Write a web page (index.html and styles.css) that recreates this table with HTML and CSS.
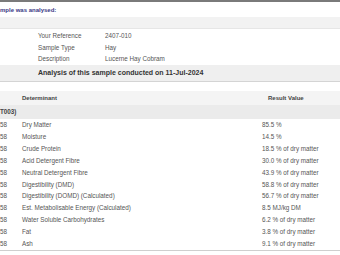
FILE: index.html
```html
<!DOCTYPE html>
<html>
<head>
<meta charset="utf-8">
<link rel="stylesheet" href="styles.css">
</head>
<body>
<div class="topbar"></div>
<div class="intro">mple was analysed:</div>
<div class="band"></div>
<div class="info">
  <div class="info-row"><span class="info-label">Your Reference</span><span>2407-010</span></div>
  <div class="info-row"><span class="info-label">Sample Type</span><span>Hay</span></div>
  <div class="info-row"><span class="info-label">Description</span><span>Lucerne Hay Cobram</span></div>
</div>
<div class="title">Analysis of this sample conducted on 11-Jul-2024</div>
<div class="results">
  <div class="row head"><span class="code"></span><span class="det">Determinant</span><span class="val">Result Value</span></div>
  <div class="row group"><span>T003)</span></div>
  <div class="row"><span class="code">58</span><span class="det">Dry Matter</span><span class="val">85.5 %</span></div>
  <div class="row"><span class="code">58</span><span class="det">Moisture</span><span class="val">14.5 %</span></div>
  <div class="row"><span class="code">58</span><span class="det">Crude Protein</span><span class="val">18.5 % of dry matter</span></div>
  <div class="row"><span class="code">58</span><span class="det">Acid Detergent Fibre</span><span class="val">30.0 % of dry matter</span></div>
  <div class="row"><span class="code">58</span><span class="det">Neutral Detergent Fibre</span><span class="val">43.9 % of dry matter</span></div>
  <div class="row"><span class="code">58</span><span class="det">Digestibility (DMD)</span><span class="val">58.8 % of dry matter</span></div>
  <div class="row"><span class="code">58</span><span class="det">Digestibility (DOMD) (Calculated)</span><span class="val">56.7 % of dry matter</span></div>
  <div class="row"><span class="code">58</span><span class="det">Est. Metabolisable Energy (Calculated)</span><span class="val">8.5 MJ/kg DM</span></div>
  <div class="row"><span class="code">58</span><span class="det">Water Soluble Carbohydrates</span><span class="val">6.2 % of dry matter</span></div>
  <div class="row"><span class="code">58</span><span class="det">Fat</span><span class="val">3.8 % of dry matter</span></div>
  <div class="row"><span class="code">58</span><span class="det">Ash</span><span class="val">9.1 % of dry matter</span></div>
</div>
</body>
</html>
```

FILE: styles.css
```css
html, body {
  margin: 0;
  padding: 0;
  background: #fff;
}
body {
  width: 340px;
  height: 255px;
  overflow: hidden;
  font-family: "Liberation Sans", Arial, sans-serif;
  font-size: 6.3px;
  color: #555;
}
.topbar {
  height: 2px;
  background: #7a7a7a;
}
.intro {
  height: 15px;
  line-height: 16px;
  font-weight: bold;
  font-size: 6px;
  color: #3c3a86;
}
.band {
  height: 11px;
  background: #f2f2f2;
  border-bottom: 1px solid #e6e6e6;
}
.info {
  padding: 1px 0 0 38px;
}
.info-row {
  display: flex;
  height: 11.7px;
  line-height: 11.7px;
}
.info-label {
  width: 67px;
}
.title {
  height: 16px;
  line-height: 16px;
  padding-left: 38px;
  background: #efefef;
  border-bottom: 1px solid #d4d4d4;
  font-weight: bold;
  font-size: 7px;
  color: #333;
}
.results {
  margin-top: 9px;
  border-bottom: 1px solid #cfcfcf;
}
.row {
  display: flex;
  height: 11.9px;
  line-height: 11.9px;
}
.row .code {
  width: 22px;
}
.row .det {
  width: 240px;
}
.row.head {
  height: 14px;
  line-height: 14px;
  background: #f4f4f4;
  font-weight: bold;
  font-size: 6px;
  color: #444;
}
.row.head .val {
  padding-left: 6px;
}
.row.group {
  height: 14px;
  line-height: 14px;
  background: #ebebeb;
  font-weight: bold;
  color: #444;
  margin-bottom: 0;
}
```
